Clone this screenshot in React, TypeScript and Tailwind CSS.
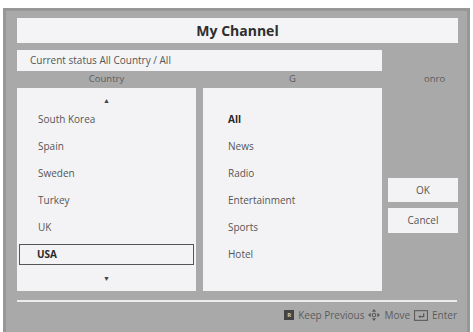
import React from 'react';

const countries = ['South Korea', 'Spain', 'Sweden', 'Turkey', 'UK', 'USA'];
const genres = ['All', 'News', 'Radio', 'Entertainment', 'Sports', 'Hotel'];

const MoveIcon = () => (
  <svg width="12" height="12" viewBox="0 0 11 11" className="mx-[4px]">
    <polygon points="5.5,0 7.5,2.5 3.5,2.5" fill="#5a5a5a" />
    <polygon points="5.5,11 7.5,8.5 3.5,8.5" fill="#5a5a5a" />
    <polygon points="0,5.5 2.5,3.5 2.5,7.5" fill="#5a5a5a" />
    <polygon points="11,5.5 8.5,3.5 8.5,7.5" fill="#5a5a5a" />
    <circle cx="5.5" cy="5.5" r="1.6" fill="none" stroke="#5a5a5a" strokeWidth="1" />
  </svg>
);

const EnterIcon = () => (
  <svg width="14" height="11" viewBox="0 0 13 10" className="mx-[4px]">
    <rect x="0.5" y="0.5" width="12" height="9" fill="none" stroke="#5a5a5a" strokeWidth="1" />
    <path d="M9 3 V6 H5" fill="none" stroke="#5a5a5a" strokeWidth="1.2" />
    <polygon points="4,6 6,4.5 6,7.5" fill="#5a5a5a" />
  </svg>
);

export default function App() {
  return (
    <div className="w-[473px] h-[332px] bg-white pt-[8px] pl-[3px] overflow-hidden" style={{ fontFamily: '"Open Sans", sans-serif' }}>
      <div className="w-[467px] h-[330px] bg-[#a9a9aa] border-[3px] border-[#979797] pt-[7px] pl-[11px] flex flex-col">
        {/* title */}
        <div className="w-[441px] h-[25px] bg-[#f4f4f6] flex items-center justify-center text-[14px] font-bold text-[#2e2e2e]">
          My Channel
        </div>

        {/* status */}
        <div className="mt-[7px] w-[365px] h-[21px] bg-[#f4f4f6] flex items-center pl-[13px] text-[10px] text-[#555]">
          Current status All Country / All
        </div>

        {/* headers */}
        <div className="h-[17px] flex items-center text-[9.5px] text-[#5c5c5c]">
          <div className="w-[179px] text-center">Country</div>
          <div className="w-[179px] ml-[7px] text-center">G</div>
          <div className="ml-[42px]">onro</div>
        </div>

        <div className="flex">
          {/* country list */}
          <div className="w-[179px] h-[203px] bg-[#f3f3f5] flex flex-col items-stretch px-[2px]">
            <div className="h-[18px] flex items-end justify-center text-[7px] text-[#444]">▲</div>
            {countries.map((c) => (
              <div
                key={c}
                className={
                  c === 'USA'
                    ? 'h-[21px] my-[3px] border-[1.5px] border-[#555] flex items-center pl-[17px] text-[10px] font-bold text-[#2a2a2a]'
                    : 'h-[27px] flex items-center pl-[19px] text-[10px] text-[#555]'
                }
              >
                {c}
              </div>
            ))}
            <div className="flex-1 flex items-center justify-center text-[7px] text-[#444]">▼</div>
          </div>

          {/* genre list */}
          <div className="ml-[7px] w-[179px] h-[203px] bg-[#f3f3f5] flex flex-col pt-[18px]">
            {genres.map((g) => (
              <div
                key={g}
                className={
                  g === 'All'
                    ? 'h-[27px] flex items-center pl-[25px] text-[10px] font-bold text-[#2a2a2a]'
                    : 'h-[27px] flex items-center pl-[25px] text-[10px] text-[#555]'
                }
              >
                {g}
              </div>
            ))}
          </div>

          {/* buttons */}
          <div className="ml-[6px] w-[70px] flex flex-col pt-[90px] gap-[6px]">
            <div className="h-[24px] bg-[#f3f3f5] flex items-center justify-center text-[10px] text-[#555]">OK</div>
            <div className="h-[25px] bg-[#f3f3f5] flex items-center justify-center text-[10px] text-[#555]">Cancel</div>
          </div>
        </div>

        {/* separator */}
        <div className="mt-[9px] w-[440px] h-[2px] bg-[#ececec]" />

        {/* footer */}
        <div className="w-[440px] h-[26px] flex items-center justify-end text-[10px] text-[#5c5c5c]">
          <span className="w-[10px] h-[10px] bg-[#444] text-[6px] text-[#ccc] leading-[10px] text-center font-bold mr-[4px]">R</span>
          <span>Keep Previous</span>
          <MoveIcon />
          <span>Move</span>
          <EnterIcon />
          <span>Enter</span>
        </div>
      </div>
    </div>
  );
}
